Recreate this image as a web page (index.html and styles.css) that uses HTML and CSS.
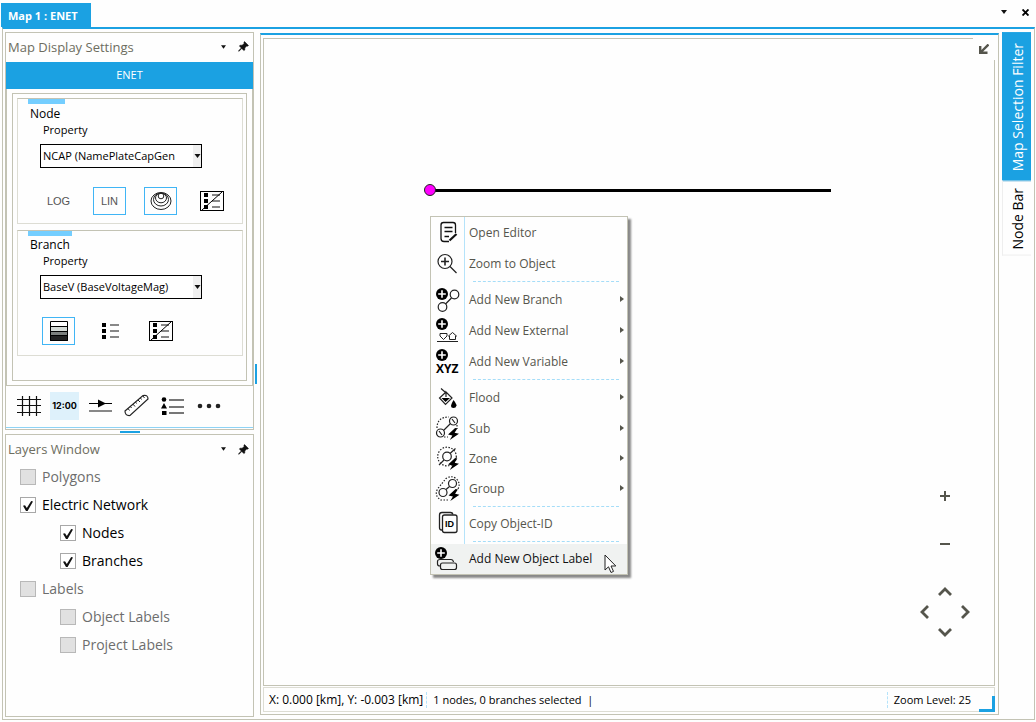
FILE: index.html
```html
<!DOCTYPE html>
<html lang="en">
<head>
<meta charset="utf-8">
<title>Map 1 : ENET</title>
<link rel="stylesheet" href="styles.css">
</head>
<body>
<svg class="defs" aria-hidden="true">
  <defs>
    <symbol id="pin" viewBox="0 0 11 11"><path d="M6.5 0.5L10.5 4.5L9.5 5.2L8.7 5L6.8 7L6.8 9L5.8 9.6L3.8 7.5L1 10.2L0.6 10.2L0.7 9.6L3.3 7L1.4 5.1L2 4.2L4.1 4.2L6.2 2.4L5.9 1.3Z" fill="#111" stroke="#111" stroke-width="0.5"/></symbol>
    <symbol id="caret" viewBox="0 0 6 4"><path d="M0 0H6L3 4Z" fill="#111"/></symbol>
    <symbol id="plus-dot" viewBox="0 0 12 12"><circle cx="6" cy="6" r="6" fill="#000"/><path d="M6 2.2V9.8M2.2 6H9.8" stroke="#fff" stroke-width="1.6"/></symbol>
    <symbol id="bolt" viewBox="0 0 10 11"><path d="M6.5 0L0 6L4 6.8L1.6 11L10 5.2L6 4.400L8.500 0.500Z" fill="#000"/></symbol>
    <symbol id="no-legend" viewBox="0 0 24 20"><rect x="0.5" y="0.5" width="23" height="19" fill="none" stroke="#000"/><path d="M4 2h4v4H4zM4 8h4v4H4zM4 14h4v4H4z" fill="#000"/><path d="M12 4h8M12 10h8M12 16h8" stroke="#888" stroke-width="2"/><path d="M2 19L22 1" stroke="#000"/></symbol>
  </defs>
</svg>
<header class="titlebar">
  <div class="doc-tab">Map 1 : ENET</div>
  <div class="doc-actions">
    <button class="plain" aria-label="Window list"><svg width="6" height="4"><use href="#caret"/></svg></button>
    <button class="plain" aria-label="Close"><svg width="7" height="7" viewBox="0 0 7 7"><path d="M0.500 0.500L6.500 6.500M6.500 0.500L0.500 6.500" stroke="#000" stroke-width="1.900"/></svg></button>
  </div>
</header>
<main class="workspace">
  <aside class="left">
    <section class="panel settings">
      <div class="panel-head">
        <h2>Map Display Settings</h2>
        <button class="plain" aria-label="Panel menu"><svg width="5" height="4"><use href="#caret"/></svg></button>
        <button class="plain" aria-label="Pin panel"><svg width="11" height="11"><use href="#pin"/></svg></button>
      </div>
      <div class="banner">ENET</div>
      <div class="settings-body">
        <div class="settings-inner">
          <section class="group node">
            <h3>Node</h3>
            <label for="node-prop">Property</label>
            <div class="combo"><select id="node-prop"><option>NCAP (NamePlateCapGen</option></select><svg width="7" height="4"><use href="#caret"/></svg></div>
            <div class="tools">
              <button class="tool">LOG</button>
              <button class="tool on">LIN</button>
              <button class="tool on" aria-label="Rings"><svg width="22" height="20" viewBox="0 0 22 20" fill="none" stroke="#222"><ellipse cx="11" cy="10" rx="10" ry="8.500"/><ellipse cx="11" cy="8.500" rx="7.500" ry="6.500"/><ellipse cx="11" cy="7" rx="5.500" ry="4.800"/><circle cx="11" cy="5" r="2.800"/></svg></button>
              <button class="tool" aria-label="Hide node legend"><svg width="24" height="20"><use href="#no-legend"/></svg></button>
            </div>
          </section>
          <section class="group branch">
            <h3>Branch</h3>
            <label for="branch-prop">Property</label>
            <div class="combo"><select id="branch-prop"><option>BaseV (BaseVoltageMag)</option></select><svg width="7" height="4"><use href="#caret"/></svg></div>
            <div class="tools">
              <button class="tool on" aria-label="Colour ramp"><svg width="18" height="20" viewBox="0 0 18 20"><path d="M0 0h18v20H0z" fill="#fff"/><path d="M0 5h18v5H0z" fill="#d4dad6"/><path d="M0 10h18v5H0z" fill="#7c807e"/><path d="M0 14h18v6H0z" fill="#222"/><path d="M0.500 0.500h17v19h-17zM0 5.500h18M0 10.500h18M0 14.500h18" fill="none" stroke="#000"/></svg></button>
              <button class="tool" aria-label="Legend"><svg width="18" height="16" viewBox="0 0 18 16"><path d="M1 0h4v4H1zM1 6h4v4H1zM1 12h4v4H1z" fill="#000"/><path d="M9 2h9M9 8h9M9 14h9" stroke="#888" stroke-width="2"/></svg></button>
              <button class="tool" aria-label="Hide branch legend"><svg width="24" height="20"><use href="#no-legend"/></svg></button>
            </div>
          </section>
        </div>
      </div>
      <div class="toolbar">
        <button class="tb" aria-label="Grid"><svg width="24" height="22" viewBox="0 0 24 22"><path d="M5.500 1V21M12.500 1V21M19.500 1V21M0 4.500H24M0 10.500H24M0 17.500H24" stroke="#111" stroke-width="1.200"/></svg></button>
        <button class="tb time">12:00</button>
        <button class="tb" aria-label="Flow arrows"><svg width="24" height="14" viewBox="0 0 24 14"><path d="M0 4.500H23" stroke="#000"/><path d="M9 0.500L17 4.500L9 8.500Z" fill="#000"/><path d="M0 12H23" stroke="#888" stroke-width="2"/></svg></button>
        <button class="tb" aria-label="Ruler"><svg width="25" height="23" viewBox="0 0 25 23"><path d="M1 17L19 1.500Q24 0.500 24 5L6 21.500Q1 22 1 17Z" fill="#fff" stroke="#222" stroke-width="1.200"/><path d="M4 14.500L5.500 16.500M6.500 12.500L7.500 14M9 10.200L11 12.500M11.500 8L12.500 9.500M14 6L16 8M16.500 4L17.500 5.500M19 2L20.500 4" stroke="#222"/></svg></button>
        <button class="tb" aria-label="Legend list"><svg width="24" height="18" viewBox="0 0 24 18"><circle cx="3" cy="2.500" r="2.300"/><path d="M3 6L6 11.500H0ZM1 14h4.500v4H1z"/><path d="M8 3H23M8 10H23M8 16H23" stroke="#777" stroke-width="2"/></svg></button>
        <button class="tb" aria-label="More"><svg width="24" height="6" viewBox="0 0 24 6" fill="#222"><circle cx="3" cy="3" r="2.300"/><circle cx="12" cy="3" r="2.300"/><circle cx="21" cy="3" r="2.300"/></svg></button>
      </div>
    </section>
    <div class="h-split"></div>
    <section class="panel layers">
      <div class="panel-head">
        <h2>Layers Window</h2>
        <button class="plain" aria-label="Panel menu"><svg width="5" height="4"><use href="#caret"/></svg></button>
        <button class="plain" aria-label="Pin panel"><svg width="11" height="11"><use href="#pin"/></svg></button>
      </div>
      <ul class="tree">
        <li><label class="off"><input type="checkbox" disabled>Polygons</label></li>
        <li><label><input type="checkbox" checked>Electric Network</label>
          <ul>
            <li><label><input type="checkbox" checked>Nodes</label></li>
            <li><label><input type="checkbox" checked>Branches</label></li>
          </ul>
        </li>
        <li><label class="off"><input type="checkbox" disabled>Labels</label>
          <ul>
            <li><label class="off"><input type="checkbox" disabled>Object Labels</label></li>
            <li><label class="off"><input type="checkbox" disabled>Project Labels</label></li>
          </ul>
        </li>
      </ul>
    </section>
  </aside>
  <div class="v-split"></div>
  <section class="map">
    <div class="canvas">
      <svg class="network" width="420" height="20"><path d="M8 10.500H409" stroke="#000" stroke-width="3"/><circle cx="8" cy="10" r="5.500" fill="#f0f" stroke="#222"/></svg>
      <button class="plain collapse" aria-label="Collapse"><svg width="10" height="10" viewBox="0 0 10 10" fill="none" stroke="#55554c" stroke-width="2.400"><path d="M9.500 0.500L2 8M1.200 2V8.800H8.500"/></svg></button>
      <div class="nav">
        <button class="plain zoom-in" aria-label="Zoom in"><svg width="10" height="10" viewBox="0 0 10 10"><path d="M5 0V10M0 5H10" stroke="#55554c" stroke-width="2"/></svg></button>
        <button class="plain zoom-out" aria-label="Zoom out"><svg width="10" height="2"><path d="M0 1H10" stroke="#55554c" stroke-width="2"/></svg></button>
        <div class="pan">
          <button class="plain up" aria-label="Pan up"><svg width="14" height="9" viewBox="0 0 14 9"><path d="M1 8L7 2L13 8" fill="none" stroke="#55554c" stroke-width="2.800"/></svg></button>
          <button class="plain lt" aria-label="Pan left"><svg width="9" height="14" viewBox="0 0 9 14"><path d="M8 1L2 7L8 13" fill="none" stroke="#55554c" stroke-width="2.800"/></svg></button>
          <button class="plain rt" aria-label="Pan right"><svg width="9" height="14" viewBox="0 0 9 14"><path d="M1 1L7 7L1 13" fill="none" stroke="#55554c" stroke-width="2.800"/></svg></button>
          <button class="plain dn" aria-label="Pan down"><svg width="14" height="9" viewBox="0 0 14 9"><path d="M1 1L7 7L13 1" fill="none" stroke="#55554c" stroke-width="2.800"/></svg></button>
        </div>
      </div>
      <div class="menu" role="menu">
        <button role="menuitem" class="item"><svg width="33" height="31" fill="none" stroke="#111" stroke-width="1.300"><path d="M24.500 16V8Q24.500 5.500 22 5.500H12.500Q10 5.500 10 8V12M10 17V21.500Q10 24.500 13 24.500H18M10 12V17M13.500 10.500H21.500M13.500 14.500H21.500M13.500 19.500H18"/><path d="M18.500 23.500L25.500 17" stroke-width="2.200"/></svg><span>Open Editor</span></button>
        <button role="menuitem" class="item"><svg width="33" height="31" fill="none" stroke="#222" stroke-width="1.200"><circle cx="14" cy="13.500" r="7"/><path d="M19 18.500L25.500 25"/><path d="M14 9.500V17.500M10 13.500H18" stroke-width="1.600"/></svg><span>Zoom to Object</span></button>
        <hr>
        <button role="menuitem" class="item sub"><svg width="33" height="31"><use href="#plus-dot" x="5" y="4" width="12" height="12"/><g fill="none" stroke="#222" stroke-width="1.200"><circle cx="23.500" cy="10.500" r="4.300"/><circle cx="11.500" cy="23" r="4.300"/><path d="M20.500 14L14.500 20"/></g></svg><span>Add New Branch</span></button>
        <button role="menuitem" class="item sub"><svg width="33" height="31"><use href="#plus-dot" x="5" y="3" width="12" height="12"/><g fill="none" stroke="#222"><path d="M9 18.500H16V21L12.500 24.500L9 21ZM17.500 21L21.500 17.500L25.500 21H24.500V24.500H18.500V21ZM6 26.500H27"/></g></svg><span>Add New External</span></button>
        <button role="menuitem" class="item sub"><svg width="33" height="31"><use href="#plus-dot" x="5" y="3" width="12" height="12"/><text x="5" y="27" class="xyz">XYZ</text></svg><span>Add New Variable</span></button>
        <hr>
        <button role="menuitem" class="item sub"><svg width="33" height="31"><path d="M10 6.500L14 10M15 10L8.500 16L14.500 22.500L21 16L15 10V15" fill="none" stroke="#222" stroke-width="1.200"/><path d="M10.500 16H19L14.500 20Z"/><path d="M22.500 18Q25.500 22 25.500 23.500Q25 26 22.500 26Q20 26 20 23.500Q20.500 21.500 22.500 18Z"/></svg><span>Flood</span></button>
        <button role="menuitem" class="item sub"><svg width="33" height="31"><g fill="none" stroke="#222" stroke-width="1.200"><circle cx="22.500" cy="8" r="4"/><circle cx="9.500" cy="20" r="4"/><path d="M19.500 10.500L12.500 17.500M21 6L24 10M8 18L11 22"/><path d="M6 15Q6 4 18 4M13 24H17M26 12V16" stroke-dasharray="1.500 1.500"/></g><use href="#bolt" x="17" y="15" width="11" height="12"/></svg><span>Sub</span></button>
        <button role="menuitem" class="item sub short"><svg width="33" height="30"><g fill="none" stroke="#222" stroke-width="1.200"><circle cx="16" cy="12.500" r="4.300"/><circle cx="16" cy="12.500" r="9.300" stroke-dasharray="1.500 1.500"/><path d="M8 21L13 16M19 9.500L24.500 4.500"/></g><use href="#bolt" x="17" y="14" width="11" height="12"/></svg><span>Zone</span></button>
        <button role="menuitem" class="item sub short"><svg width="33" height="30"><g fill="none" stroke="#222" stroke-width="1.200"><circle cx="21.500" cy="9.500" r="4"/><circle cx="12" cy="18.500" r="4"/><path d="M18.500 12.500L15 15.500"/><path d="M17 26H10Q3 22 6.500 15L15 4.500Q20 1 25 4.500Q30 9 27 15" stroke-dasharray="1.500 1.500"/></g><use href="#bolt" x="17" y="15" width="12" height="12"/></svg><span>Group</span></button>
        <hr>
        <button role="menuitem" class="item short"><svg width="33" height="30"><g fill="none" stroke="#222" stroke-width="1.300"><path d="M11 21H10.500Q8.500 21 8.500 18.500V6Q8.500 3.500 11 3.500H19.500Q21.500 3.500 22 5.500"/><rect x="11.500" y="6" width="14.500" height="17.500" rx="2"/></g><text x="14" y="18" class="id">ID</text></svg><span>Copy Object-ID</span></button>
        <hr>
        <button role="menuitem" class="item short hover"><svg width="33" height="30"><use href="#plus-dot" x="4" y="3" width="12" height="12"/><g fill="none" stroke="#222" stroke-width="1.200"><path d="M9 22Q6.500 22 6.500 20V17.500Q6.500 15.500 9 15.500H20Q22 15.500 22.500 18"/><rect x="9.500" y="19" width="16" height="6.500" rx="2"/></g></svg><span>Add New Object Label</span></button>
      </div>
      <svg class="cursor" width="13" height="20" viewBox="0 0 13 20"><path d="M1 1V16L4.500 12.800L7 18.500L9.500 17.400L7 12H11.800Z" fill="#fff" stroke="#222"/></svg>
    </div>
    <footer class="status">
      <span class="coords">X: 0.000 [km], Y: -0.003 [km]</span>
      <span class="selection">1 nodes, 0 branches selected &nbsp;|</span>
      <span class="level">Zoom Level: 25</span>
      <span class="grip"></span>
    </footer>
  </section>
  <nav class="side-tabs">
    <button class="active">Map Selection Filter</button>
    <button>Node Bar</button>
  </nav>
</main>
</body>
</html>
```

FILE: styles.css
```css
* { box-sizing: border-box; }
body {
  margin: 0;
  height: 100vh;
  display: flex;
  flex-direction: column;
  padding: 3px 1px 2px 2px;
  background: #fefefe;
  color: #000;
  font: 12px/16px "Open Sans", "Noto Sans", sans-serif;
}
button { font: inherit; color: inherit; border: 0; padding: 0; background: none; }
svg { display: block; flex: none; }
h2, h3, ul { margin: 0; padding: 0; font-weight: 400; list-style: none; }
.defs { position: absolute; width: 0; height: 0; }
.plain { display: grid; place-items: center; }

.titlebar { display: flex; justify-content: space-between; align-items: stretch; height: 24px; }
.doc-tab { margin-left: -1px; padding: 5px 10px 0 7px; background: #1ba1e2; color: #fff; font-weight: 700; font-size: 11px; min-width: 90px; }
.doc-actions { display: flex; gap: 15px; align-items: center; padding: 0 6px 6px 0; }

.workspace {
  flex: 1;
  min-height: 0;
  display: flex;
  border: 1px solid #c3c3b4;
  border-top: 2px solid #1ba1e2;
  padding: 3px 3px 2px 2px;
}
.left { width: 249px; display: flex; flex-direction: column; }
.panel { border: 1px solid #c3c3b4; display: flex; flex-direction: column; }
.panel-head { display: flex; align-items: center; gap: 12px; height: 29px; padding: 0 4px 2px 2px; color: #6d6d60; }
.panel-head h2 { flex: 1; font-size: 13px; line-height: 18px; }
.banner { height: 27px; line-height: 25px; text-align: center; background: #1ba1e2; color: #fff; font-size: 11px; }
.settings-body { padding: 4px 5px; border: solid #c3c3b4; border-width: 0 1px 1px; }
.settings-inner { border: 1px solid #c3c3b4; padding: 4px 3px 24px 4px; display: flex; flex-direction: column; gap: 6px; }
.group { position: relative; border: 1px solid #ddddd4; border-top-color: #c3c3b4; height: 126px; padding: 7px 12px 0; }
.group::before { content: ""; position: absolute; left: 10px; top: 0; height: 5px; width: 37px; background: #74ceff; }
.branch { padding-top: 6px; }
.branch::before { width: 44px; }
.group h3 { font-size: 12px; line-height: 16px; }
.group label { display: block; margin-left: 13px; line-height: 16px; font-size: 11px; }
.combo { position: relative; width: 162px; margin: 6px 0 0 10px; }
.combo select { appearance: none; display: block; width: 100%; height: 24px; border: 1px solid #000; border-radius: 0; padding: 0 16px 2px 2px; background: linear-gradient(90deg, #fff 152px, #f0f0f0 152px); color: #000; font: 11px "Open Sans", "Noto Sans", sans-serif; }
.combo svg { position: absolute; right: 1px; top: 10px; pointer-events: none; }
.tools { display: flex; gap: 18px; margin: 19px 0 0 12px; }
.branch .tools { margin-top: 18px; }
.tool { width: 33px; height: 28px; display: grid; place-items: center; font: 11px "Liberation Sans", sans-serif; color: #555; border: 1px solid transparent; }
.tool.on { border-color: #40b5f5; }
.toolbar { height: 42px; display: flex; align-items: center; gap: 7px; padding: 0 8px 2px; border-bottom: 1px solid #8ed3f5; }
.tb { width: 29px; height: 28px; display: grid; place-items: center; }
.tb.time { background: #def1fb; font: 700 9px "Inter", sans-serif; }
.settings { padding-bottom: 1px; }
.h-split { height: 4px; display: grid; place-items: center; }
.h-split::before { content: ""; width: 20px; height: 2px; background: #1ba1e2; }
.layers { flex: 1; }
.layers .panel-head { height: 28px; padding-bottom: 0; }

.tree { padding-left: 14px; }
.tree ul { padding-left: 40px; }
.tree label { display: flex; align-items: center; gap: 6px; height: 28px; font-size: 14px; }
.tree .off { color: #6d6d6d; }
.tree input { appearance: none; position: relative; width: 16px; height: 16px; margin: 0; border: 1px solid #a8a8a8; background: #fff; }
.tree input:disabled { background: #e1e1e1; border-color: #b8b8b8; }
.tree input:checked::before { content: ""; position: absolute; left: 2px; top: 3px; width: 10px; height: 10px; background: #111; clip-path: polygon(0 48%, 20% 42%, 38% 70%, 82% 0, 100% 4%, 46% 100%, 30% 100%); }

.v-split { width: 6px; display: grid; align-items: center; padding-bottom: 2px; }
.v-split::before { content: ""; width: 2px; height: 20px; margin-left: 1px; background: #1ba1e2; }

.map { flex: 1; min-width: 0; display: flex; flex-direction: column; gap: 1px; border: 1px solid #c3c3b4; border-top: 2px solid #1ba1e2; padding: 3px 3px 2px 2px; margin: 1px 0 2px; }
.canvas { position: relative; flex: 1; border: 1px solid #c3c3b4; }
.network { position: absolute; left: 158px; top: 141px; }
.collapse { position: absolute; right: -1px; top: -1px; width: 22px; height: 22px; background: #fefefe; }
.nav { position: absolute; right: 24px; bottom: 48px; display: flex; flex-direction: column; align-items: center; }
.zoom-out { margin-top: 42px; }
.pan { margin-top: 42px; width: 50px; height: 50px; display: grid; grid-template: 9px 32px 9px / 9px 32px 9px; place-items: center; }
.up { grid-area: 1 / 2; } .lt { grid-area: 2 / 1; } .rt { grid-area: 2 / 3; } .dn { grid-area: 3 / 2; }

.menu { position: absolute; left: 166px; top: 177px; width: 198px; border: 1px solid #c3c3b4; background: linear-gradient(90deg, #fefefe 33px, #b5e3fa 33px, #b5e3fa 34px, #fefefe 34px); box-shadow: 3px 3px 2px #888; }
.item { width: 100%; height: 31px; display: flex; align-items: center; gap: 5px; color: #55554c; text-align: left; }
.item.short { height: 30px; }
.item.hover { background: #f0f2f1; color: #111; }
.sub::after { content: ""; margin: 0 3px 2px auto; border: solid transparent; border-width: 3px 0 3px 4px; border-left-color: #55554c; }
.menu hr { margin: 2px 8px 2px 42px; border: 0; border-top: 1px dashed #a5ddf8; }
.xyz { font: 700 12px "Open Sans", sans-serif; }
.id { font: 700 9px "Liberation Sans", sans-serif; }
.cursor { position: absolute; left: 340px; top: 515px; }

.status { position: relative; display: flex; align-items: center; height: 25px; border: 1px solid #ddddd4; padding: 0 23px 0 5px; font-size: 11px; }
.coords { font-size: 12px; }
.selection { border-left: 1px dashed #b5e3fa; margin-left: 3px; padding-left: 6px; }
.level { margin-left: auto; padding-left: 6px; border-left: 1px dashed #b5e3fa; }
.grip { position: absolute; right: -1px; bottom: -1px; width: 16px; height: 16px; border: solid #1ba1e2; border-width: 0 3px 3px 0; }

.side-tabs { display: flex; flex-direction: column; align-items: stretch; width: 29px; margin-left: 3px; }
.side-tabs button { writing-mode: vertical-rl; transform: rotate(180deg); padding: 9px 0 10px; font-size: 14px; line-height: 27px; border: 1px solid #eee; border-left: 0; }
.side-tabs .active { background: #1ba1e2; color: #fff; border-color: #1ba1e2; }
.side-tabs button:last-child { padding: 5px 0 6px; }
```
